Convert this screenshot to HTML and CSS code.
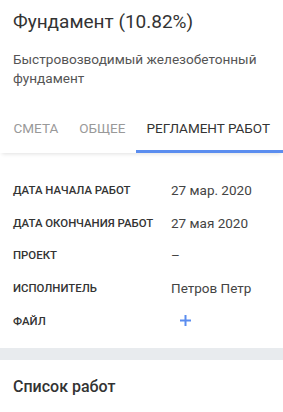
FILE: index.html
```html
<!DOCTYPE html>
<html lang="ru">
<head>
<meta charset="utf-8">
<link rel="stylesheet" href="styles.css">
</head>
<body>
<div class="page">
  <header class="head">
    <h1 class="title">Фундамент (10.82%)</h1>
    <p class="desc">Быстровозводимый железобетонный фундамент</p>
  </header>
  <nav class="tabs">
    <div class="tab">Смета</div>
    <div class="tab">Общее</div>
    <div class="tab active">Регламент работ</div>
  </nav>
  <section class="props">
    <div class="row"><div class="label">Дата начала работ</div><div class="value">27 мар. 2020</div></div>
    <div class="row"><div class="label">Дата окончания работ</div><div class="value">27 мая 2020</div></div>
    <div class="row"><div class="label">Проект</div><div class="value">–</div></div>
    <div class="row"><div class="label">Исполнитель</div><div class="value">Петров Петр</div></div>
    <div class="row"><div class="label">Файл</div><div class="value"><svg class="plus" width="11" height="11" viewBox="0 0 11 11"><path d="M5.5 0v11M0 5.5h11" stroke="#5b8def" stroke-width="2" fill="none"/></svg></div></div>
  </section>
  <div class="band"></div>
  <section class="list">
    <h2 class="list-title">Список работ</h2>
  </section>
</div>
</body>
</html>
```
FILE: styles.css
```css
html, body { margin: 0; padding: 0; background: #fff; }
body { font-family: Roboto, "Noto Sans", sans-serif; color: #333; width: 283px; overflow: hidden; }
.page { display: flex; flex-direction: column; }
.head { padding: 9px 13px 0; }
.title { margin: 0; font-size: 19px; font-weight: 400; line-height: 26px; color: #333; }
.desc { margin: 15px 0 0; font-size: 13.6px; line-height: 19px; color: #555; }
.tabs { display: flex; padding: 0 0 0 3px; margin-top: 22.5px; box-shadow: 0 3px 4px -2px rgba(0,0,0,0.12); position: relative; }
.tab { padding: 9px 10.5px 14.5px; font-size: 13.5px; font-weight: 400; text-transform: uppercase; color: #999; line-height: 16px; border-bottom: 3px solid transparent; white-space: nowrap; }
.tab.active { color: #333; border-bottom-color: #5b8def; flex: 1; }
.props { padding: 20.6px 13px 10.6px; display: flex; flex-direction: column; }
.row { display: flex; align-items: center; height: 32.75px; }
.label { width: 158px; font-size: 11.4px; font-weight: 500; text-transform: uppercase; color: #333; white-space: nowrap; }
.value { font-size: 13.5px; color: #444; }
.plus { display: block; margin-left: 9px; }
.band { height: 12px; background: #e8ebee; }
.list { padding: 17px 13px 20px; }
.list-title { margin: 0; font-size: 16px; font-weight: 500; line-height: 20px; color: #333; }
```
